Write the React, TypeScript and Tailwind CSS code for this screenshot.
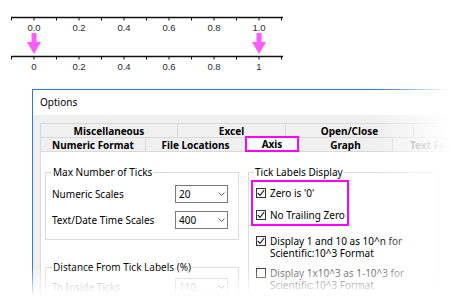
import React from "react";

const FONT = '"Noto Sans", "Open Sans", sans-serif';

function Chevron() {
  return (
    <svg width="7" height="4" viewBox="0 0 7 4" className="block">
      <polyline points="0.5,0.5 3.5,3.5 6.5,0.5" fill="none" stroke="#6b6b6b" strokeWidth="1" />
    </svg>
  );
}

function Combo({ value, disabled }: { value: string; disabled?: boolean }) {
  return (
    <div
      className={`w-[53px] h-[18px] border bg-white flex items-center justify-between pl-[3px] pr-[2px] ${
        disabled ? "border-[#cfcfcf] text-[#a8a8a8]" : "border-[#7a7a7a] text-black"
      }`}
    >
      <span className="leading-[12px]">{value}</span>
      <Chevron />
    </div>
  );
}

function Check({ checked }: { checked: boolean }) {
  return (
    <div className="w-[10px] h-[10px] border border-[#333] bg-white flex items-center justify-center shrink-0">
      {checked && (
        <svg width="8" height="8" viewBox="0 0 8 8" className="block">
          <polyline points="0.8,4 3,6.3 7.2,1.2" fill="none" stroke="#222" strokeWidth="1.1" />
        </svg>
      )}
    </div>
  );
}

function Axis() {
  const majors = [0, 1, 2, 3, 4, 5].map((k) => 34 + 45 * k);
  const minors = [0, 1, 2, 3, 4, 5, 6].map((k) => 11.5 + 45 * k);
  const top = ["0.0", "0.2", "0.4", "0.6", "0.8", "1.0"];
  const bottom = ["0", "0.2", "0.4", "0.6", "0.8", "1"];
  const arrow = (x: number) =>
    `${x - 2.5},33 ${x + 2.5},33 ${x + 2.5},42 ${x + 7},42 ${x},54 ${x - 7},42 ${x - 2.5},42`;
  return (
    <svg width="450" height="85" className="block">
      {[17.5, 56.5].map((y, i) => (
        <g key={y}>
          <line x1="11" y1={y} x2="283" y2={y} stroke="#111" strokeWidth="1.3" />
          {minors.map((x) => (
            <line key={"m" + x} x1={x} y1={y} x2={x} y2={y + 3} stroke="#111" strokeWidth="1" />
          ))}
          {majors.map((x) => (
            <line key={"M" + x} x1={x} y1={y} x2={x} y2={y + 3} stroke="#111" strokeWidth="1" />
          ))}
          {(i === 0 ? top : bottom).map((t, k) => (
            <text
              key={t + k}
              x={majors[k]}
              y={i === 0 ? 31 : 70}
              textAnchor="middle"
              fontSize="9.5"
              fontFamily='"Liberation Sans", Arial, sans-serif'
              fill="#2a2a2a"
            >
              {t}
            </text>
          ))}
        </g>
      ))}
      <polygon points={arrow(34)} fill="#ff5cff" />
      <polygon points={arrow(259)} fill="#ff5cff" />
    </svg>
  );
}

function Tab({ w, children, muted }: { w: string; children?: React.ReactNode; muted?: boolean }) {
  return (
    <div
      className={`${w} h-[15px] -ml-px first:ml-0 border border-[#d9d9d9] bg-[#f0f0f0] flex items-center justify-center font-bold text-[10px] leading-[12px] shrink-0 overflow-hidden whitespace-nowrap ${
        muted ? "text-[#9a9a9a]" : "text-black"
      }`}
    >
      {children}
    </div>
  );
}

export default function App() {
  return (
    <div className="relative w-[450px] h-[307px] overflow-hidden bg-white" style={{ fontFamily: FONT }}>
      <Axis />
      <div className="ml-[32px] mt-[4px] w-[440px] border-l border-t border-[#2d7bd4]">
        <div className="h-[25px] bg-white flex items-center pl-[7px] text-[10px] text-black">Options</div>
        <div className="bg-[#f0f0f0] pl-[7px] pt-[8px] text-[10px] text-black">
          <div className="flex">
            <Tab w="w-[138px]">Miscellaneous</Tab>
            <Tab w="w-[109px]">Excel</Tab>
            <Tab w="w-[129px]">Open/Close</Tab>
            <Tab w="w-[100px]" />
          </div>
          <div className="flex -mt-px">
            <Tab w="w-[106px]">Numeric Format</Tab>
            <Tab w="w-[101px]">File Locations</Tab>
            <div className="w-[54px] h-[16px] -ml-px -mt-px border-2 border-[#ff00ff] bg-white flex items-center justify-center font-bold text-[10px] leading-[12px] shrink-0 relative z-10">
              Axis
            </div>
            <Tab w="w-[95px]">Graph</Tab>
            <Tab w="w-[60px]" muted>
              <span className="pl-[22px]">Text Font</span>
            </Tab>
          </div>
          <div className="h-[160px] -mt-px bg-white border-l border-t border-[#d9d9d9] pl-[4px] pt-[14px] flex items-start gap-[9px]">
            <div className="w-[194px] shrink-0">
              <fieldset className="border border-[#dcdcdc] pl-[6px] pr-[10px] pt-[7px] pb-[10px] min-w-0">
                <legend className="px-[1px] leading-[12px]">Max Number of Ticks</legend>
                <div className="flex flex-col gap-[8px]">
                  <div className="flex items-center justify-between">
                    <span>Numeric Scales</span>
                    <Combo value="20" />
                  </div>
                  <div className="flex items-center justify-between">
                    <span>Text/Date Time Scales</span>
                    <Combo value="400" />
                  </div>
                </div>
              </fieldset>
              <fieldset className="mt-[21px] border border-[#dcdcdc] pl-[6px] pr-[10px] pt-[5px] pb-[10px] min-w-0">
                <legend className="px-[1px] leading-[12px]">Distance From Tick Labels (%)</legend>
                <div className="flex items-center justify-between text-[#a0a0a0]">
                  <span>To Inside Ticks</span>
                  <Combo value="110" disabled />
                </div>
              </fieldset>
            </div>
            <fieldset className="w-[190px] shrink-0 h-[140px] border border-[#dcdcdc] pl-[2px] pt-[2px] min-w-0">
              <legend className="ml-[3px] px-[1px] leading-[12px]">Tick Labels Display</legend>
              <div className="w-[98px] border-2 border-[#ff00ff] pl-[3px] pt-[5px] pb-[3px] flex flex-col gap-[10px]">
                <div className="flex items-center gap-[4px] leading-[12px]">
                  <Check checked />
                  <span>Zero is '0'</span>
                </div>
                <div className="flex items-center gap-[4px] leading-[12px] whitespace-nowrap">
                  <Check checked />
                  <span>No Trailing Zero</span>
                </div>
              </div>
              <div className="mt-[9px] pl-[5px] flex items-start gap-[4px] leading-[12px]">
                <div className="mt-[1px]">
                  <Check checked />
                </div>
                <div className="flex flex-col whitespace-nowrap">
                  <div>Display 1 and 10 as 10^n for</div>
                  <div>Scientific:10^3 Format</div>
                </div>
              </div>
              <div className="mt-[8px] pl-[5px] flex items-start gap-[4px] leading-[12px] text-[#555]">
                <div className="mt-[1px]">
                  <Check checked={false} />
                </div>
                <div className="flex flex-col whitespace-nowrap">
                  <div>Display 1x10^3 as 1-10^3 for</div>
                  <div>Scientific:10^3 Format</div>
                </div>
              </div>
            </fieldset>
          </div>
        </div>
      </div>
      <div className="absolute top-[85px] right-0 bottom-0 w-[75px] bg-linear-to-r from-white/0 to-white" />
      <div className="absolute left-0 right-0 top-[266px] bottom-0 bg-linear-to-b from-white/0 from-0% to-white to-75%" />
    </div>
  );
}
